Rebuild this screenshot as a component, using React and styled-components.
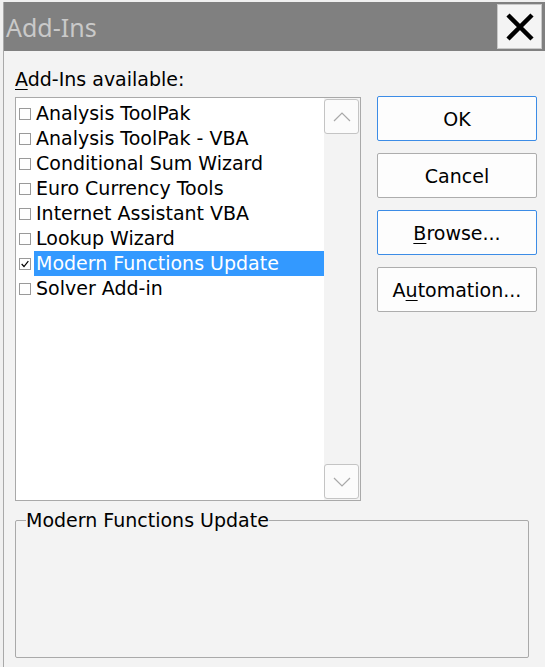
import React, { useState } from 'react';
import styled, { createGlobalStyle } from 'styled-components';

const GlobalStyle = createGlobalStyle`
  html, body {
    margin: 0;
    padding: 0;
    background: #f0f0f0;
  }
  body {
    font-family: 'DejaVu Sans', 'Noto Sans', sans-serif;
    color: #000;
  }
`;

const Window = styled.div`
  width: 541px;
  height: 665px;
  margin: 2px 0 0 3px;
  border-left: 1px solid #a9a9a9;
  background: #f3f3f3;
  display: flex;
  flex-direction: column;
`;

const TitleBar = styled.div`
  height: 49px;
  flex: none;
  background: #808080;
  display: flex;
  align-items: center;
  justify-content: space-between;
  padding: 0 3px 0 2px;
`;

const Title = styled.span`
  font-family: 'Noto Sans', sans-serif;
  font-size: 25px;
  color: #c9c9c9;
  line-height: 1;
  margin-top: 2px;
`;

const CloseButton = styled.button`
  width: 45px;
  height: 45px;
  background: #f4f4f4;
  border: 1px solid #c8c8c8;
  display: flex;
  align-items: center;
  justify-content: center;
  padding: 0;
`;

const Body = styled.div`
  padding: 16px 8px 0 11px;
  display: flex;
  flex-direction: column;
`;

const Label = styled.div`
  font-size: 19px;
  line-height: 24px;
  height: 30px;
  u { text-decoration-thickness: 1px; text-underline-offset: 3px; }
`;

const Main = styled.div`
  display: flex;
  gap: 16px;
`;

const ListBox = styled.div`
  width: 344px;
  height: 402px;
  flex: none;
  border: 1px solid #a9a9a9;
  background: #fff;
  display: flex;
`;

const Items = styled.div`
  flex: 1;
  padding: 3px 0 0 3px;
`;

const Row = styled.div`
  display: flex;
  align-items: center;
  height: 25px;
`;

const Box = styled.span`
  width: 12px;
  height: 12px;
  border: 1px solid #9a9a9a;
  margin-right: 3px;
  display: flex;
  align-items: center;
  justify-content: center;
  box-sizing: border-box;
  flex: none;
`;

const ItemText = styled.span`
  font-size: 19px;
  line-height: 25px;
  height: 25px;
  flex: 1;
  padding-left: 2px;
  background: ${p => (p.$selected ? '#3399ff' : 'transparent')};
  color: ${p => (p.$selected ? '#fff' : '#000')};
  white-space: nowrap;
`;

const ScrollBar = styled.div`
  width: 35px;
  background: #f3f3f3;
  display: flex;
  flex-direction: column;
  justify-content: space-between;
  padding: 1px 1px 1px 0;
`;

const ArrowButton = styled.div`
  width: 33px;
  height: 33px;
  border: 1px solid #c4c4c4;
  border-radius: 3px;
  background: #fbfbfb;
  display: flex;
  align-items: center;
  justify-content: center;
`;

const Buttons = styled.div`
  display: flex;
  flex-direction: column;
  gap: 12px;
  margin-top: -1px;
`;

const Button = styled.button`
  width: 160px;
  height: 45px;
  background: #fdfdfd;
  border: 1px solid ${p => (p.$accent ? '#3c8ce6' : '#adadad')};
  border-radius: 2px;
  font-family: inherit;
  font-size: 19px;
  color: #000;
  padding: 0;
  u { text-decoration-thickness: 1px; text-underline-offset: 3px; }
`;

const Group = styled.fieldset`
  margin: 9px 0 0 0;
  width: 514px;
  height: 148px;
  box-sizing: border-box;
  border: 1px solid #a9a9a9;
  border-radius: 2px;
  padding: 0;
`;

const Legend = styled.legend`
  font-size: 19px;
  padding: 0;
  margin-left: 10px;
  line-height: 20px;
`;

const addIns = [
  'Analysis ToolPak',
  'Analysis ToolPak - VBA',
  'Conditional Sum Wizard',
  'Euro Currency Tools',
  'Internet Assistant VBA',
  'Lookup Wizard',
  'Modern Functions Update',
  'Solver Add-in',
];

const Chevron = ({ up }) => (
  <svg width="18" height="10" viewBox="0 0 18 10">
    <path
      d={up ? 'M1 9 L9 1 L17 9' : 'M1 1 L9 9 L17 1'}
      fill="none"
      stroke="#a8a8a8"
      strokeWidth="1.2"
    />
  </svg>
);

export default function App() {
  const [selected, setSelected] = useState(6);
  const [checked, setChecked] = useState({ 6: true });

  return (
    <>
      <GlobalStyle />
      <Window>
        <TitleBar>
          <Title>Add-Ins</Title>
          <CloseButton>
            <svg width="30" height="30" viewBox="0 0 30 30">
              <path d="M3 3 L27 27 M27 3 L3 27" stroke="#000" strokeWidth="4.5" />
            </svg>
          </CloseButton>
        </TitleBar>
        <Body>
          <Label><u>A</u>dd-Ins available:</Label>
          <Main>
            <ListBox>
              <Items>
                {addIns.map((name, i) => (
                  <Row key={name} onClick={() => setSelected(i)}>
                    <Box onClick={() => setChecked({ ...checked, [i]: !checked[i] })}>
                      {checked[i] && (
                        <svg width="12" height="12" viewBox="0 0 12 12">
                          <path d="M2 6 L4.8 9 L10 2.5" fill="none" stroke="#000" strokeWidth="1.4" />
                        </svg>
                      )}
                    </Box>
                    <ItemText $selected={selected === i}>{name}</ItemText>
                  </Row>
                ))}
              </Items>
              <ScrollBar>
                <ArrowButton><Chevron up /></ArrowButton>
                <ArrowButton><Chevron /></ArrowButton>
              </ScrollBar>
            </ListBox>
            <Buttons>
              <Button $accent>OK</Button>
              <Button>Cancel</Button>
              <Button $accent><u>B</u>rowse...</Button>
              <Button>A<u>u</u>tomation...</Button>
            </Buttons>
          </Main>
          <Group>
            <Legend>{addIns[selected]}</Legend>
          </Group>
        </Body>
      </Window>
    </>
  );
}
